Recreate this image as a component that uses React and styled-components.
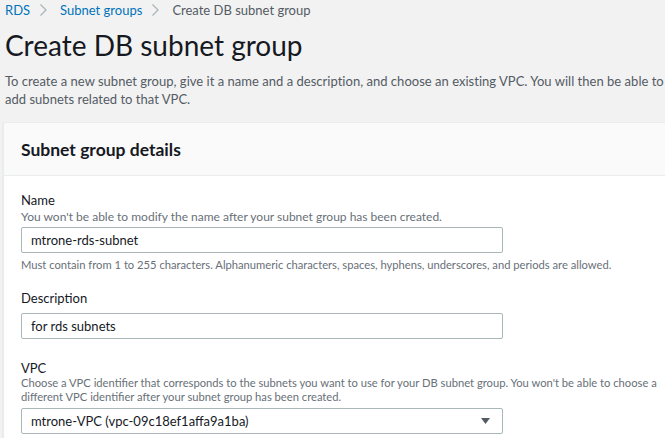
import React from "react";
import styled, { createGlobalStyle } from "styled-components";

const GlobalStyle = createGlobalStyle`
  html, body {
    margin: 0;
    padding: 0;
    background: #f2f2f2;
    font-family: Lato, "Open Sans", Arial, sans-serif;
    color: #16191f;
    overflow: hidden;
  }
`;

const Page = styled.div`
  width: 700px;
  padding: 0 0 0 5px;
`;

const Breadcrumbs = styled.nav`
  display: flex;
  align-items: center;
  height: 20px;
  font-size: 13px;
`;

const Crumb = styled.span`
  color: ${(p) => (p.$current ? "#545b64" : "#0073bb")};
`;

const Sep = styled.span`
  display: inline-flex;
  margin: 0 12px 0 9px;
  svg { display: block; }
`;

const Title = styled.h1`
  margin: 7px 0 0;
  font-size: 28px;
  font-weight: 400;
  line-height: 36px;
  color: #16191f;
`;

const Intro = styled.p`
  margin: 9px 0 0;
  font-size: 13px;
  letter-spacing: 0.02px;
  line-height: 18px;
  color: #545b64;
  width: 660px;
`;

const Panel = styled.section`
  margin: 14px 0 0 -2px;
  background: #fff;
  border-top: 1px solid #eaeded;
  border-left: 1px solid #eaeded;
  box-shadow: 0 1px 1px rgba(0, 28, 36, 0.2);
`;

const PanelHeader = styled.header`
  height: 52px;
  display: flex;
  align-items: center;
  padding: 0 17px;
  background: #fafafa;
  border-bottom: 1px solid #eaeded;
  font-size: 17.5px;
  font-weight: 700;
  color: #16191f;
`;

const PanelBody = styled.div`
  padding: 14px 17px 20px;
  display: flex;
  flex-direction: column;
`;

const Field = styled.div`
  display: flex;
  flex-direction: column;
  margin-top: ${(p) => p.$top || 0}px;
`;

const Label = styled.label`
  font-size: 13px;
  line-height: 20px;
  color: #16191f;
`;

const Hint = styled.div`
  font-size: ${(p) => p.$size || 11.2}px;
  line-height: 14px;
  color: #687078;
  width: 640px;
  margin-top: ${(p) => p.$above || 0}px;
  margin-bottom: ${(p) => p.$below || 0}px;
`;

const Constraint = styled(Hint)`
  margin-top: 5px;
`;

const Input = styled.div`
  box-sizing: border-box;
  width: 482px;
  height: 26px;
  margin-top: ${(p) => p.$gap || 0}px;
  border: 1px solid #aab7b8;
  border-radius: 2px;
  background: #fff;
  display: flex;
  align-items: center;
  justify-content: space-between;
  padding: 0 12px 0 9px;
  font-size: 13px;
  color: #16191f;
`;

const Chevron = () => (
  <svg width="9" height="14" viewBox="0 0 9 14">
    <path d="M1.5 1.5 L7 7 L1.5 12.5" fill="none" stroke="#aab7b8" strokeWidth="1.3" />
  </svg>
);

const Caret = () => (
  <svg width="9" height="6" viewBox="0 0 9 6">
    <path d="M0 0 H9 L4.5 6 Z" fill="#545b64" />
  </svg>
);

export default function App() {
  return (
    <>
      <GlobalStyle />
      <Page>
        <Breadcrumbs>
          <Crumb>RDS</Crumb>
          <Sep><Chevron /></Sep>
          <Crumb>Subnet groups</Crumb>
          <Sep><Chevron /></Sep>
          <Crumb $current>Create DB subnet group</Crumb>
        </Breadcrumbs>
        <Title>Create DB subnet group</Title>
        <Intro>
          To create a new subnet group, give it a name and a description, and choose an existing VPC. You will then be able to add subnets related to that VPC.
        </Intro>
        <Panel>
          <PanelHeader>Subnet group details</PanelHeader>
          <PanelBody>
            <Field>
              <Label>Name</Label>
              <Hint $size={12} $below={2}>You won't be able to modify the name after your subnet group has been created.</Hint>
              <Input $gap={1}>mtrone-rds-subnet</Input>
              <Constraint>
                Must contain from 1 to 255 characters. Alphanumeric characters, spaces, hyphens, underscores, and periods are allowed.
              </Constraint>
            </Field>
            <Field $top={16}>
              <Label>Description</Label>
              <Input $gap={5}>for rds subnets</Input>
            </Field>
            <Field $top={19}>
              <Label>VPC</Label>
              <Hint $above={-2} $below={4}>
                Choose a VPC identifier that corresponds to the subnets you want to use for your DB subnet group. You won't be able to choose a different VPC identifier after your subnet group has been created.
              </Hint>
              <Input>
                <span>mtrone-VPC (vpc-09c18ef1affa9a1ba)</span>
                <Caret />
              </Input>
            </Field>
          </PanelBody>
        </Panel>
      </Page>
    </>
  );
}
